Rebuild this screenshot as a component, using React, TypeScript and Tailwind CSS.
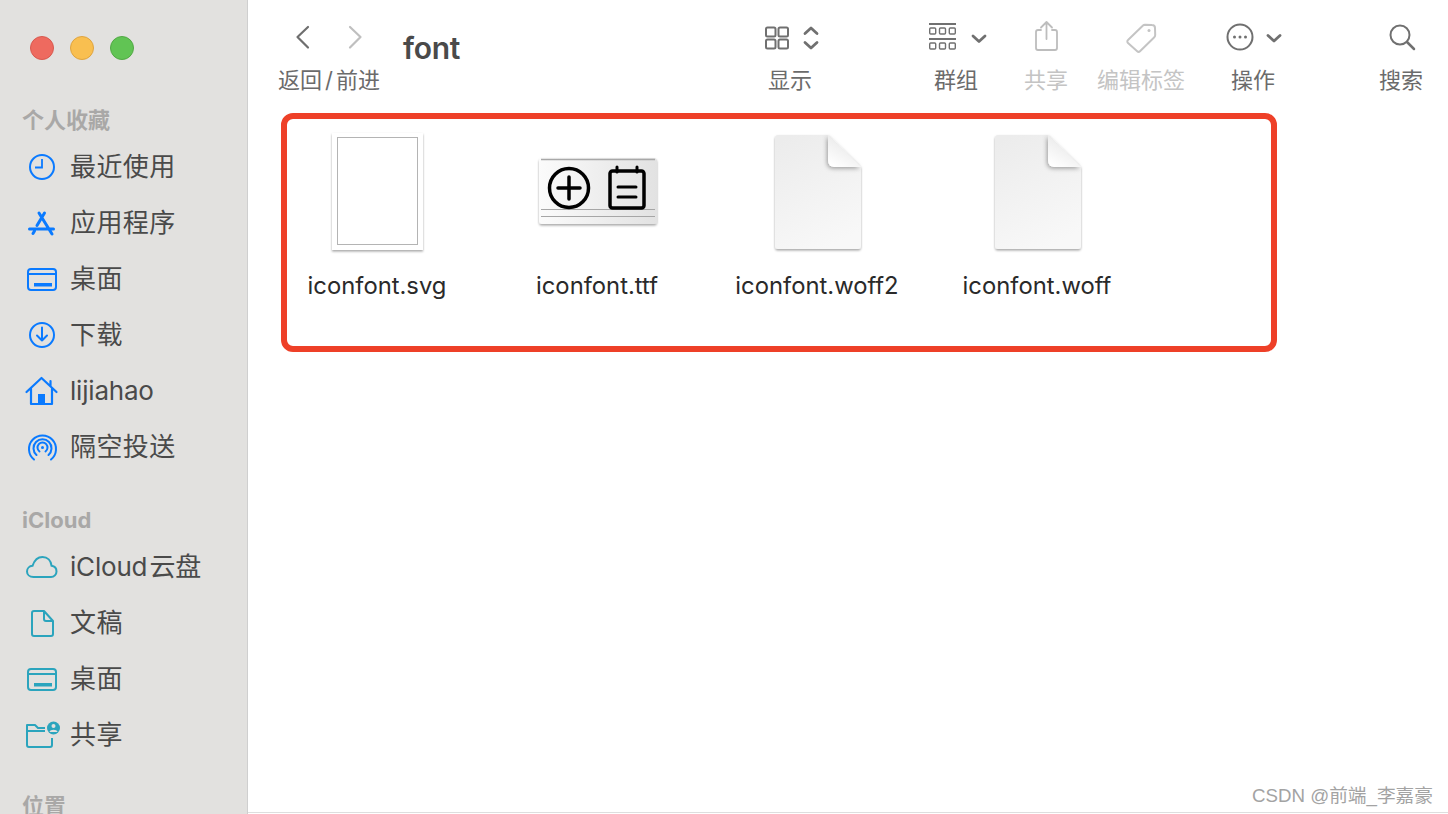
import React from 'react';

const SANS = "font-['Inter','Noto_Sans_CJK_SC',sans-serif]";
const BLUE = '#0a7aff';
const TEAL = '#2ba4bd';

const ClockIcon = () => (
  <g fill="none" stroke={BLUE} strokeWidth="2">
    <circle cx="18" cy="18" r="12" />
    <path d="M18 10v8.5h-7" strokeWidth="1.8" />
  </g>
);
const AppsIcon = () => (
  <g fill="none" stroke={BLUE} strokeWidth="3" strokeLinecap="round">
    <path d="M15 8l13 21M20.5 8L13 20.500M5.500 24h24M10.500 26L9 28.500" />
  </g>
);
const DesktopIcon = ({ color }: { color: string }) => (
  <g fill="none" stroke={color} strokeWidth="2">
    <rect x="4" y="8" width="28" height="21" rx="3" />
    <path d="M4 13h28" />
    <rect x="10" y="22" width="18" height="3.5" fill={color} stroke="none" />
  </g>
);
const DownloadIcon = () => (
  <g fill="none" stroke={BLUE} strokeWidth="2">
    <circle cx="18" cy="18" r="12" />
    <path d="M18 10.5v13M13 18.5l5 5 5-5" strokeLinecap="round" strokeLinejoin="round" />
  </g>
);
const HomeIcon = () => (
  <g fill="none" stroke={BLUE} strokeWidth="2.2" strokeLinejoin="round" strokeLinecap="round">
    <path d="M2.5 19L17.5 5l15 14M7 15.5V31h21V15.5M26.5 8v5" />
    <rect x="14" y="21" width="7" height="10" fill={BLUE} stroke="none" />
  </g>
);
const AirdropIcon = () => (
  <g fill="none" stroke={BLUE} strokeWidth="2" strokeLinecap="round">
    <path d="M10 30.5a13.5 13.5 0 1 1 17 0" />
    <path d="M12.5 26a9 9 0 1 1 12 0" />
    <path d="M15.5 22.5a5 5 0 1 1 6 0" />
    <circle cx="18.5" cy="18.5" r="1.5" fill={BLUE} stroke="none" />
  </g>
);
const CloudIcon = () => (
  <g fill="none" stroke={TEAL} strokeWidth="2">
    <path d="M9.500 28C5.500 28 3 25.500 3 22.500c0-3 2.400-5.500 5.500-5.700C10.500 11 14 8 18.500 8c5 0 8.500 3.600 9 8.700 3 .4 5 2.800 5 5.700 0 3-2.400 5.600-5.500 5.600z" />
  </g>
);
const DocIcon = () => (
  <g fill="none" stroke={TEAL} strokeWidth="2" strokeLinejoin="round">
    <path d="M10 6h10l9 10v13a2 2 0 0 1-2 2H10a2 2 0 0 1-2-2V8a2 2 0 0 1 2-2z" />
    <path d="M20 6v8a2 2 0 0 0 2 2h7" />
  </g>
);
const SharedIcon = () => (
  <g fill="none" stroke={TEAL} strokeWidth="2" strokeLinejoin="round">
    <path d="M28 21v7a2 2 0 0 1-2 2H5a2 2 0 0 1-2-2V8h8l3 3h7" />
    <path d="M3 14h18" />
    <circle cx="29.5" cy="11" r="6.5" fill={TEAL} stroke="none" />
    <circle cx="29.5" cy="9" r="2" fill="#e2e1df" stroke="none" />
    <path d="M25.5 15c.5-3 7.5-3 8 0z" fill="#e2e1df" stroke="none" />
  </g>
);

const favorites = [
  { label: '最近使用', icon: <ClockIcon /> },
  { label: '应用程序', icon: <AppsIcon /> },
  { label: '桌面', icon: <DesktopIcon color={BLUE} /> },
  { label: '下载', icon: <DownloadIcon /> },
  { label: 'lijiahao', icon: <HomeIcon />, tight: true },
  { label: '隔空投送', icon: <AirdropIcon /> },
];

const icloud = [
  { label: 'iCloud\u200A云盘', icon: <CloudIcon />, tight: true },
  { label: '文稿', icon: <DocIcon /> },
  { label: '桌面', icon: <DesktopIcon color={TEAL} /> },
  { label: '共享', icon: <SharedIcon /> },
];

const SideRow = ({ label, icon, tight }: { label: string; icon: React.ReactNode; tight?: boolean }) => (
  <div className="flex items-center h-[56px] pl-[24px]">
    <svg width="36" height="36" viewBox="0 0 36 36" className="shrink-0">{icon}</svg>
    <span className={`ml-[10px] text-[26px] leading-[36px] text-[#4a4a4a] ${tight ? 'tracking-[-0.2px]' : 'tracking-[0.4px]'}`}>{label}</span>
  </div>
);

const SideLabel = ({ children, className }: { children: React.ReactNode; className: string }) => (
  <div className={`pl-[22px] h-[32px] text-[22px] leading-[32px] font-bold text-[#a9a8a7] ${className}`}>{children}</div>
);

const Sidebar = () => (
  <aside className="w-[248px] h-[814px] shrink-0 overflow-hidden bg-[#e2e1df] border-r border-[#cfcfcf] pt-[36px]">
    <div className="flex gap-[16px] pl-[30px]">
      <div className="w-[24px] h-[24px] rounded-full bg-[#ee6a5f] border border-[#d8594f]" />
      <div className="w-[24px] h-[24px] rounded-full bg-[#f9bf50] border border-[#dfa440]" />
      <div className="w-[24px] h-[24px] rounded-full bg-[#61c454] border border-[#52a945]" />
    </div>
    <SideLabel className="mt-[44px] mb-[3px]">个人收藏</SideLabel>
    {favorites.map((r, i) => <SideRow key={i} {...r} />)}
    <SideLabel className="mt-[29px] mb-[3px]">iCloud</SideLabel>
    {icloud.map((r, i) => <SideRow key={i} {...r} />)}
    <SideLabel className="mt-[27px]">位置</SideLabel>
  </aside>
);

const ToolItem = ({ width, label, faded, className, children }: { width: string; label: string; faded?: boolean; className: string; children: React.ReactNode }) => (
  <div className={`flex flex-col items-center shrink-0 ${width} ${className}`}>
    <svg width="100%" height="40" className="overflow-visible">{children}</svg>
    <div className={`mt-[10px] text-[22px] leading-[24px] whitespace-nowrap ${faded ? 'text-[#c4c4c4]' : 'text-[#6b6b6b]'}`}>{label}</div>
  </div>
);

const Toolbar = () => (
  <div className="flex h-[113px] pt-[18px] pl-[30px]">
    <div className="w-[102px] shrink-0">
      <svg width="102" height="40">
        <path d="M30 9L19.500 19 30 29.500" fill="none" stroke="#6f6f6f" strokeWidth="2.2" strokeLinecap="round" strokeLinejoin="round" />
        <path d="M72 9L82.500 19 72 29.500" fill="none" stroke="#bfbfbf" strokeWidth="2.2" strokeLinecap="round" strokeLinejoin="round" />
      </svg>
      <div className="mt-[10px] text-[22px] leading-[24px] whitespace-nowrap text-[#6b6b6b]">返回<span className="mx-[3px]">/</span>前进</div>
    </div>
    <div className="w-[60px] ml-[23px] mt-[14px] shrink-0 text-[30px] leading-[32px] font-semibold tracking-[-0.25px] text-[#4a4a4a]">font</div>
    <ToolItem width="w-[60px]" label="显示" className="ml-[297px]">
      <g fill="none" stroke="#707070" strokeWidth="2">
        <rect x="6" y="9.500" width="9.5" height="9" rx="1.5" />
        <rect x="18.5" y="9.500" width="9.5" height="9" rx="1.5" />
        <rect x="6" y="21.500" width="9.5" height="9" rx="1.5" />
        <rect x="18.5" y="21.500" width="9.5" height="9" rx="1.5" />
        <path d="M45 15.500l6-5.500 6 5.500M45 24.500l6 5.500 6-5.500" strokeWidth="2.800" strokeLinecap="round" strokeLinejoin="round" />
      </g>
    </ToolItem>
    <ToolItem width="w-[60px]" label="群组" className="ml-[106px]">
      <g fill="none" stroke="#707070">
        <path d="M3 6h27M3 21h27" strokeWidth="1.800" />
        <g strokeWidth="1.400">
          <rect x="3.700" y="10" width="6" height="6" rx="1" />
          <rect x="13.500" y="10" width="6" height="6" rx="1" />
          <rect x="23.300" y="10" width="6" height="6" rx="1" />
          <rect x="3.700" y="25" width="6" height="6" rx="1" />
          <rect x="13.500" y="25" width="6" height="6" rx="1" />
          <rect x="23.300" y="25" width="6" height="6" rx="1" />
        </g>
        <path d="M47 18l6 5.500 6-5.500" strokeWidth="2.800" strokeLinecap="round" strokeLinejoin="round" />
      </g>
    </ToolItem>
    <ToolItem width="w-[40px]" label="共享" faded className="ml-[40px]">
      <g fill="none" stroke="#bdbdbd" strokeWidth="1.800" strokeLinecap="round" strokeLinejoin="round">
        <path d="M15 12h-3a2 2 0 0 0-2 2v16a2 2 0 0 0 2 2h17a2 2 0 0 0 2-2V14a2 2 0 0 0-2-2h-3" />
        <path d="M20.500 21V4.500M15 9.500l5.500-5.500 5.500 5.500" />
      </g>
    </ToolItem>
    <ToolItem width="w-[90px]" label="编辑标签" faded className="ml-[30px]">
      <g fill="none" stroke="#c4c4c4" strokeWidth="2" strokeLinejoin="round">
        <path d="M32 22L47 7.500a3 3 0 0 1 2-.8l7 .3a3 3 0 0 1 3 3l.2 7a3 3 0 0 1-.9 2.200L44 33.200a2 2 0 0 1-2.800 0L32 25a2 2 0 0 1 0-3z" />
        <circle cx="53" cy="12.500" r="1.500" fill="#c4c4c4" stroke="none" />
      </g>
    </ToolItem>
    <ToolItem width="w-[60px]" label="操作" className="ml-[37px]">
      <g fill="none" stroke="#707070" strokeWidth="2">
        <circle cx="17" cy="19" r="12.500" />
        <circle cx="11.500" cy="19" r="1.500" fill="#707070" stroke="none" />
        <circle cx="17" cy="19" r="1.500" fill="#707070" stroke="none" />
        <circle cx="22.500" cy="19" r="1.500" fill="#707070" stroke="none" />
        <path d="M45 17.500l6 5.500 6-5.500" strokeWidth="2.800" strokeLinecap="round" strokeLinejoin="round" />
      </g>
    </ToolItem>
    <ToolItem width="w-[40px]" label="搜索" className="ml-[98px]">
      <g fill="none" stroke="#707070">
        <circle cx="19" cy="17" r="9.500" strokeWidth="2" />
        <path d="M26 24l7 7" strokeWidth="2.500" strokeLinecap="round" />
      </g>
    </ToolItem>
  </div>
);

const SvgThumb = () => (
  <>
    <rect x="45" y="3" width="91" height="117" fill="#fff" filter="url(#thumbShadow)" />
    <rect x="50.500" y="7.500" width="80" height="107" fill="#fff" stroke="#b4b4b4" />
  </>
);

const TtfThumb = () => (
  <>
    <rect x="32" y="28" width="118" height="66" rx="3" fill="url(#ttfFill)" filter="url(#thumbShadow)" />
    <path d="M34 29.500h114" stroke="#a8a8a8" strokeWidth="1.500" />
    <path d="M34 79.500h114M34 86.500h114" stroke="#a6a6a6" />
    <g fill="none" stroke="#000" strokeWidth="3.500" strokeLinecap="round">
      <circle cx="62" cy="58" r="19.500" />
      <path d="M62 47v22M51 58h22" />
      <rect x="103" y="41" width="34" height="37" rx="2.500" />
      <path d="M110 37v5M130 37v5" strokeWidth="3" />
      <path d="M111 57h18M111 67h18" strokeWidth="3" />
    </g>
  </>
);

const BlankDoc = () => (
  <>
    <path d="M51 5h50l33 32v79a3 3 0 0 1-3 3H51a3 3 0 0 1-3-3V8a3 3 0 0 1 3-3z" fill="url(#docFill)" filter="url(#thumbShadow)" />
    <path d="M101 5l33 32h-27a6 6 0 0 1-6-6z" fill="url(#foldFill)" filter="url(#foldShadow)" />
  </>
);

const files = [
  { name: 'iconfont.svg', thumb: <SvgThumb /> },
  { name: 'iconfont.ttf', thumb: <TtfThumb /> },
  { name: 'iconfont.woff2', thumb: <BlankDoc /> },
  { name: 'iconfont.woff', thumb: <BlankDoc /> },
];

const FileGrid = () => (
  <div className="ml-[33px] w-[996px] h-[239px] rounded-[12px] border-[6px] border-[#ee4028] pt-[11px] flex gap-[40px]">
    {files.map(f => (
      <div key={f.name} className="w-[180px] shrink-0">
        <svg width="180" height="125" viewBox="0 0 180 125" className="overflow-visible">{f.thumb}</svg>
        <div className="mt-[16px] text-center text-[23.800px] leading-[30px] text-[#2a2a2a] whitespace-nowrap">{f.name}</div>
      </div>
    ))}
  </div>
);

export default function App() {
  return (
    <div className={`relative flex w-[1448px] h-[814px] overflow-hidden bg-white ${SANS}`}>
      <svg width="0" height="0" className="absolute">
        <defs>
          <filter id="thumbShadow" x="-15%" y="-15%" width="130%" height="130%">
            <feDropShadow dx="0" dy="1.500" stdDeviation="1.200" floodColor="#000" floodOpacity="0.35" />
          </filter>
          <filter id="foldShadow" x="-30%" y="-30%" width="160%" height="160%">
            <feDropShadow dx="-1" dy="1.500" stdDeviation="2" floodColor="#000" floodOpacity="0.35" />
          </filter>
          <linearGradient id="ttfFill" x1="0" y1="0" x2="1" y2="0">
            <stop offset="0" stopColor="#fbfbfb" />
            <stop offset="1" stopColor="#e2e2e2" />
          </linearGradient>
          <linearGradient id="docFill" x1="0.2" y1="0" x2="0.6" y2="1">
            <stop offset="0" stopColor="#ececec" />
            <stop offset="1" stopColor="#f8f8f8" />
          </linearGradient>
          <linearGradient id="foldFill" x1="0.2" y1="1" x2="0.7" y2="0.2">
            <stop offset="0" stopColor="#ffffff" />
            <stop offset="1" stopColor="#e8e8e8" />
          </linearGradient>
        </defs>
      </svg>
      <Sidebar />
      <main className="flex-1 h-[813px] border-b border-[#dedede]">
        <Toolbar />
        <FileGrid />
      </main>
      <div className="absolute right-[15px] top-[784px] text-[18.700px] leading-[24px] text-[#a3a3a3] font-['Liberation_Sans','Noto_Sans_CJK_SC',sans-serif]">CSDN @前端_李嘉豪</div>
    </div>
  );
}
